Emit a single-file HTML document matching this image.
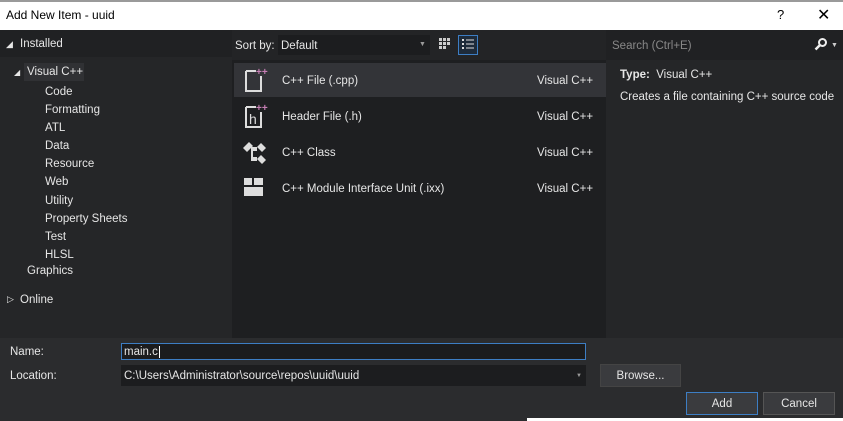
<!DOCTYPE html>
<html><head><style>
*{margin:0;padding:0;box-sizing:border-box}
body{width:843px;height:421px;overflow:hidden;background:#2b2c2e;font-family:"Liberation Sans",sans-serif;font-size:11.5px;color:#e6e6e6;position:relative}
.a{position:absolute;white-space:nowrap}
</style></head><body>
<div class="a" style="left:0;top:0;width:843px;height:30px;background:#fff;border-top:2px solid #9a9a9a"></div>
<div class="a" style="left:6px;top:8px;color:#000;font-size:12px">Add New Item - uuid</div>
<div class="a" style="left:777px;top:7px;color:#000;font-size:13px">?</div>
<div class="a" style="left:817px;top:5px;color:#000;font-size:16px">✕</div>
<div class="a" style="left:0;top:30px;width:232px;height:308px;background:#252628"></div>
<div class="a" style="left:0;top:30px;width:232px;height:27px;background:#202123"></div>
<div class="a" style="left:232px;top:30px;width:374px;height:30px;background:#232426"></div>
<div class="a" style="left:232px;top:60px;width:374px;height:278px;background:#1e1f21"></div>
<div class="a" style="left:606px;top:30px;width:237px;height:308px;background:#252628"></div>
<div class="a" style="left:606px;top:30px;width:237px;height:30px;background:#202123"></div>
<div class="a" style="left:6px;top:39px;font-size:9px">◢</div>
<div class="a" style="left:20px;top:38px">Installed</div>
<div class="a" style="left:24px;top:63px;width:60px;height:18px;background:#303134"></div>
<div class="a" style="left:14px;top:68px;font-size:8px">◢</div>
<div class="a" style="left:27px;top:66px">Visual C++</div>
<div class="a" style="left:45px;top:83px;line-height:18.1px">Code<br>Formatting<br>ATL<br>Data<br>Resource<br>Web<br>Utility<br>Property Sheets<br>Test<br>HLSL</div>
<div class="a" style="left:27px;top:265px">Graphics</div>
<div class="a" style="left:7px;top:294px;font-size:9px">▷</div>
<div class="a" style="left:20px;top:294px">Online</div>
<div class="a" style="left:235px;top:40px">Sort by:</div>
<div class="a" style="left:278px;top:35px;width:152px;height:20px;background:#1c1d1f"></div>
<div class="a" style="left:281px;top:40px">Default</div>
<div class="a" style="left:419px;top:41px;font-size:7px;color:#999">▼</div>
<svg class="a" style="left:438px;top:37px" width="14" height="14"><g fill="#ccc"><rect x="1" y="1" width="3" height="3"/><rect x="5" y="1" width="3" height="3"/><rect x="9" y="1" width="3" height="3"/><rect x="1" y="5" width="3" height="3"/><rect x="5" y="5" width="3" height="3"/><rect x="9" y="5" width="3" height="3"/><rect x="1" y="9" width="3" height="3"/><rect x="5" y="9" width="3" height="3"/></g></svg>
<div class="a" style="left:458px;top:35px;width:20px;height:20px;border:1px solid #3d7ec4;background:#1e2b3a"></div>
<svg class="a" style="left:461px;top:38px" width="14" height="14"><g fill="#ddd"><rect x="1" y="1" width="2" height="2"/><rect x="5" y="1.5" width="8" height="1"/><rect x="1" y="5" width="2" height="2"/><rect x="5" y="5.5" width="8" height="1"/><rect x="1" y="9" width="2" height="2"/><rect x="5" y="9.5" width="8" height="1"/></g></svg>
<div class="a" style="left:234px;top:63px;width:372px;height:34px;background:#333438"></div>
<svg class="a" style="left:243px;top:66px" width="25" height="28"><path d="M3 5h10M3 5v20h15V10" stroke="#ddd" stroke-width="2" fill="none"/><text x="13" y="9" fill="#c77fb5" font-size="10" font-family="Liberation Sans" font-weight="bold">++</text></svg>
<div class="a" style="left:282px;top:75px">C++ File (.cpp)</div>
<div class="a" style="left:537px;top:75px">Visual C++</div>
<svg class="a" style="left:243px;top:102px" width="25" height="28"><path d="M3 5h10M3 5v20h15V10" stroke="#ddd" stroke-width="2" fill="none"/><text x="6" y="22" fill="#ddd" font-size="14" font-family="Liberation Sans">h</text><text x="13" y="9" fill="#c77fb5" font-size="10" font-family="Liberation Sans" font-weight="bold">++</text></svg>
<div class="a" style="left:282px;top:111px">Header File (.h)</div>
<div class="a" style="left:537px;top:111px">Visual C++</div>
<svg class="a" style="left:241px;top:139px" width="28" height="28"><g fill="#ddd"><path d="M2 9l6-6 4 4-6 6z"/><path d="M10 8h6v4h-4v6h4v4h-6z"/><path d="M16 8l4-4 5 5-4 4z"/><path d="M16 20l4-4 5 5-4 4z"/></g></svg>
<div class="a" style="left:282px;top:147px">C++ Class</div>
<div class="a" style="left:537px;top:147px">Visual C++</div>
<svg class="a" style="left:243px;top:177px" width="22" height="22"><g fill="#ddd"><rect x="1" y="1" width="8" height="7"/><rect x="11" y="1" width="9" height="7"/><rect x="1" y="10" width="19" height="9"/></g></svg>
<div class="a" style="left:282px;top:183px">C++ Module Interface Unit (.ixx)</div>
<div class="a" style="left:537px;top:183px">Visual C++</div>
<div class="a" style="left:612px;top:40px;color:#888">Search (Ctrl+E)</div>
<svg class="a" style="left:814px;top:37px" width="14" height="14"><circle cx="8.5" cy="5.5" r="3.5" stroke="#eee" stroke-width="2" fill="none"/><path d="M6 8l-4.5 4.5" stroke="#eee" stroke-width="2.5"/></svg>
<div class="a" style="left:831px;top:42px;font-size:7px;color:#ccc">▼</div>
<div class="a" style="left:620px;top:69px"><b>Type:</b>&nbsp; Visual C++</div>
<div class="a" style="left:620px;top:91px">Creates a file containing C++ source code</div>
<div class="a" style="left:10px;top:346px">Name:</div>
<div class="a" style="left:121px;top:343px;width:465px;height:17px;background:#1b1c1e;border:1px solid #3d7ec4"></div>
<div class="a" style="left:124px;top:346px">main.c<span style="border-left:1px solid #fff;margin-left:1px"></span></div>
<div class="a" style="left:10px;top:370px">Location:</div>
<div class="a" style="left:121px;top:365px;width:465px;height:21px;background:#1c1d1f"></div>
<div class="a" style="left:124px;top:370px">C:\Users\Administrator\source\repos\uuid\uuid</div>
<div class="a" style="left:576px;top:373px;font-size:6px;color:#999">▼</div>
<div class="a" style="left:600px;top:364px;width:81px;height:23px;background:#3a3b3e;border:1px solid #444;text-align:center;line-height:22px">Browse...</div>
<div class="a" style="left:686px;top:392px;width:72px;height:23px;background:#3a3b3e;border:1px solid #3d7ec4;text-align:center;line-height:22px">Add</div>
<div class="a" style="left:763px;top:392px;width:72px;height:23px;background:#3a3b3e;border:1px solid #555;text-align:center;line-height:22px">Cancel</div>
<div class="a" style="left:527px;top:418px;width:316px;height:3px;background:#fff"></div>
</body></html>
